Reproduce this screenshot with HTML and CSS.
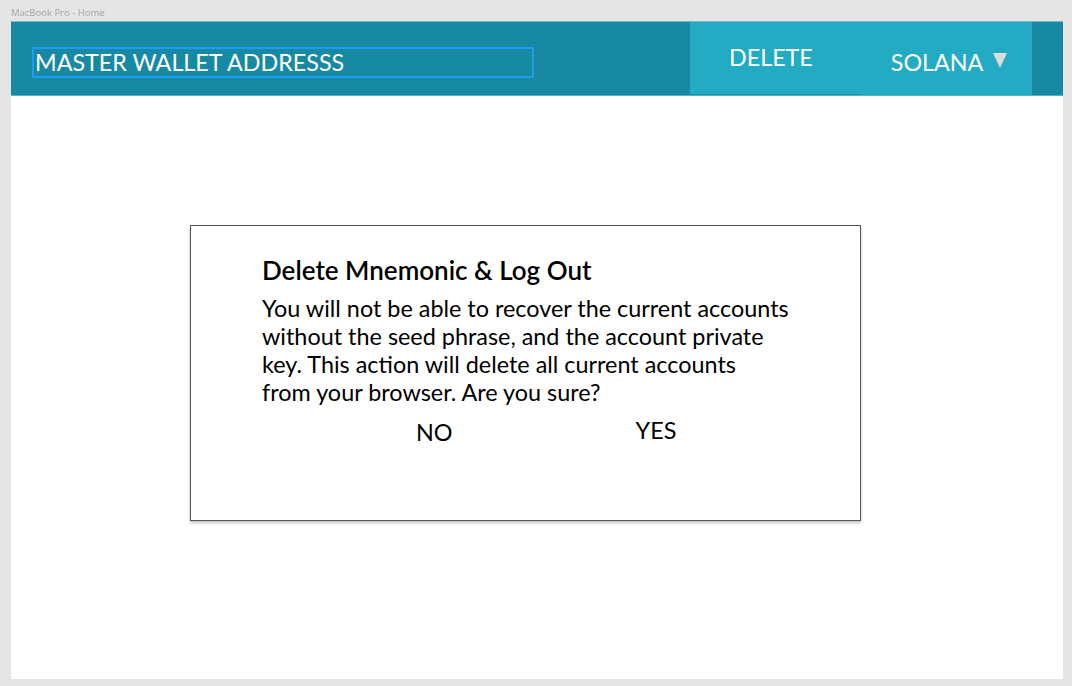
FILE: index.html
```html
<!DOCTYPE html>
<html>
<head>
<meta charset="utf-8">
<link rel="stylesheet" href="styles.css">
</head>
<body>
<div class="frame-label">MacBook Pro - Home</div>
<div class="artboard">
  <header class="topbar">
    <div class="address">MASTER WALLET ADDRESSS</div>
    <div class="actions">
      <div class="delete-btn">DELETE</div>
      <div class="network">SOLANA<span class="caret"></span></div>
    </div>
  </header>
  <main class="content">
    <div class="dialog">
      <h2 class="dialog-title">Delete Mnemonic &amp; Log Out</h2>
      <p class="dialog-text">You will not be able to recover the current accounts<br>without the seed phrase, and the account private<br>key. This action will delete all current accounts<br>from your browser. Are you sure?</p>
      <div class="dialog-buttons">
        <span class="btn-no">NO</span>
        <span class="btn-yes">YES</span>
      </div>
    </div>
  </main>
</div>
</body>
</html>
```

FILE: styles.css
```css
html, body {
  margin: 0;
  padding: 0;
}
body {
  background: #e5e5e5;
  width: 1072px;
  height: 686px;
  overflow: hidden;
  font-family: Lato, "Liberation Sans", sans-serif;
}
.frame-label {
  height: 21px;
  padding-left: 11px;
  font-family: "Open Sans", "Liberation Sans", Arial, sans-serif;
  font-size: 9.5px;
  line-height: 26px;
  color: #a6a6a6;
  box-sizing: border-box;
}
.artboard {
  margin-left: 11px;
  width: 1052px;
  height: 658px;
  background: #ffffff;
  display: flex;
  flex-direction: column;
}
.topbar {
  height: 75px;
  background: #1789a3;
  border-top: 1px solid #6fb9c9;
  box-sizing: border-box;
  display: flex;
  align-items: stretch;
  border-bottom: 1px solid #4fb3c6;
}
.address {
  margin-left: 21px;
  margin-top: 25px;
  width: 502px;
  height: 31px;
  box-sizing: border-box;
  border: 2px solid #1e9cf0;
  color: #ffffff;
  font-size: 23.3px;
  line-height: 27px;
  padding-left: 1px;
}
.actions {
  margin-left: auto;
  margin-right: 31px;
  width: 342px;
  background: #22abc3;
  display: flex;
  color: #ffffff;
  font-size: 23.3px;
  position: relative;
}
.actions::after {
  content: "";
  position: absolute;
  left: 0;
  bottom: 0;
  width: 171px;
  height: 1px;
  background: #1a8fa8;
}
.delete-btn {
  padding-left: 39px;
  padding-top: 22px;
  line-height: 27px;
}
.network {
  margin-left: 78px;
  padding-top: 26px;
  line-height: 28px;
  display: flex;
  align-items: flex-start;
}
.caret {
  display: inline-block;
  margin-left: 10px;
  margin-top: 5px;
  width: 0;
  height: 0;
  border-left: 7px solid transparent;
  border-right: 7px solid transparent;
  border-top: 15px solid #dcdcdc;
}
.content {
  flex: 1;
  padding-top: 129px;
  padding-left: 179px;
}
.dialog {
  width: 671px;
  height: 296px;
  box-sizing: border-box;
  border: 1px solid #555555;
  box-shadow: 0 2px 3px rgba(0, 0, 0, 0.25);
  padding: 28px 0 0 71px;
  color: #000000;
}
.dialog-title {
  margin: 0;
  font-size: 26px;
  font-weight: 600;
  line-height: 32px;
}
.dialog-text {
  margin: 8px 0 0 0;
  font-size: 23.4px;
  line-height: 28px;
}
.dialog-buttons {
  display: flex;
  font-size: 23.4px;
  line-height: 28px;
}
.btn-no {
  margin-left: 154px;
  margin-top: 12px;
}
.btn-yes {
  margin-left: 183px;
  margin-top: 10px;
}
```
